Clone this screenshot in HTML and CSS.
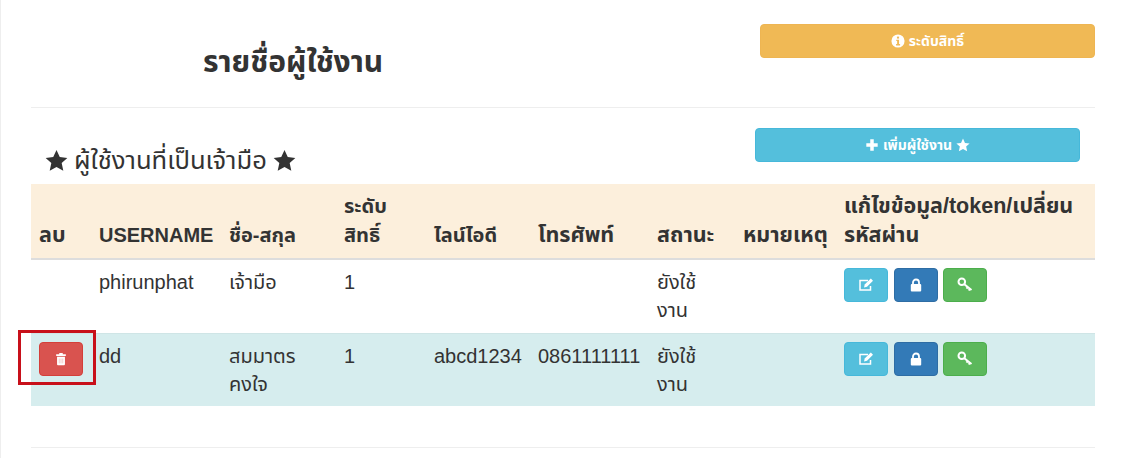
FILE: index.html
```html
<!DOCTYPE html>
<html lang="th">
<head>
<meta charset="utf-8">
<title>รายชื่อผู้ใช้งาน</title>
<link rel="stylesheet" href="styles.css">
</head>
<body>
<svg class="defs" width="0" height="0" aria-hidden="true">
  <symbol id="star" viewBox="0 0 24 24"><path d="M12 1l3.400 7.400 7.900.9-5.900 5.400 1.700 8L12 18.700 4.900 22.700l1.700-8L.7 9.300l7.900-.9z" fill="currentColor"/></symbol>
</svg>
<main class="page">
  <section class="top">
    <h3 class="title">รายชื่อผู้ใช้งาน</h3>
    <a class="btn warning top-btn">
      <svg class="ico" viewBox="0 0 16 16"><circle cx="8" cy="8" r="7.500" fill="currentColor"/><rect x="6.800" y="3" width="2.400" height="2.200" fill="#f0b955"/><path d="M6 6.500h3.200v5h1.200V13H5.800v-1.500H7V8H6z" fill="#f0b955"/></svg>
      ระดับสิทธิ์
    </a>
  </section>
  <hr class="rule">
  <section class="sub">
    <h4 class="subtitle"><svg class="ico star-big"><use href="#star"/></svg> ผู้ใช้งานที่เป็นเจ้ามือ <svg class="ico star-big"><use href="#star"/></svg></h4>
    <a class="btn info add-btn">
      <svg class="ico" viewBox="0 0 16 16"><path d="M6 1.500h4V6h4.500v4H10v4.500H6V10H1.500V6H6z" fill="currentColor"/></svg>
      เพิ่มผู้ใช้งาน
      <svg class="ico"><use href="#star"/></svg>
    </a>
  </section>
  <table class="users">
    <colgroup>
      <col class="c1"><col class="c2"><col class="c3"><col class="c4"><col class="c5"><col class="c6"><col class="c7"><col class="c8"><col class="c9">
    </colgroup>
    <thead>
      <tr>
        <th class="thai">ลบ</th><th>USERNAME</th><th>ชื่อ-สกุล</th><th>ระดับ สิทธิ์</th><th>ไลน์ไอดี</th><th class="thai">โทรศัพท์</th><th class="thai">สถานะ</th><th class="thai">หมายเหตุ</th><th class="thai">แก้ไขข้อมูล/token/เปลี่ยน รหัสผ่าน</th>
      </tr>
    </thead>
    <tbody>
      <tr class="first">
        <td></td><td>phirunphat</td><td>เจ้ามือ</td><td>1</td><td></td><td></td><td>ยังใช้ งาน</td><td></td>
        <td>
          <div class="actions">
            <a class="btn icon info"><svg class="ico big" viewBox="0 0 16 16"><path d="M12.500 9v4H2v-9.500h8" fill="none" stroke="currentColor" stroke-width="1.500"/><path d="M6 10.500l.7-3L12.800 1.500l2.200 2.200-6 6z" fill="currentColor"/></svg></a>
            <a class="btn icon primary"><svg class="ico big" viewBox="0 0 16 16"><path d="M5 7V5.500a3 3 0 0 1 6 0V7" fill="none" stroke="currentColor" stroke-width="1.800"/><rect x="2.800" y="7" width="10.400" height="7.500" rx="1" fill="currentColor"/></svg></a>
            <a class="btn icon success"><svg class="ico big" viewBox="0 0 16 16"><circle cx="4.800" cy="4.800" r="3.300" fill="none" stroke="currentColor" stroke-width="2"/><path d="M7.300 7.300l7.200 5.700M10.800 10l-1.300 1.700M13 11.800l-1.300 1.700" fill="none" stroke="currentColor" stroke-width="2"/></svg></a>
          </div>
        </td>
      </tr>
      <tr class="hl">
        <td>
          <div class="marked">
            <a class="btn icon danger"><svg class="ico" viewBox="0 0 16 16"><path d="M6 1h4v1.500h3.500v2h-11v-2H6z" fill="currentColor"/><path d="M3.500 5.500h9V14a1 1 0 0 1-1 1h-7a1 1 0 0 1-1-1z" fill="currentColor"/><path d="M6 7.500v5.500M8 7.500v5.500M10 7.500v5.500" stroke="#eeb7b5" stroke-width=".8"/></svg></a>
            <span class="callout"></span>
          </div>
        </td>
        <td>dd</td><td>สมมาตร คงใจ</td><td>1</td><td>abcd1234</td><td>0861111111</td><td>ยังใช้ งาน</td><td></td>
        <td>
          <div class="actions">
            <a class="btn icon info"><svg class="ico big" viewBox="0 0 16 16"><path d="M12.500 9v4H2v-9.500h8" fill="none" stroke="currentColor" stroke-width="1.500"/><path d="M6 10.500l.7-3L12.800 1.500l2.200 2.200-6 6z" fill="currentColor"/></svg></a>
            <a class="btn icon primary"><svg class="ico big" viewBox="0 0 16 16"><path d="M5 7V5.500a3 3 0 0 1 6 0V7" fill="none" stroke="currentColor" stroke-width="1.800"/><rect x="2.800" y="7" width="10.400" height="7.500" rx="1" fill="currentColor"/></svg></a>
            <a class="btn icon success"><svg class="ico big" viewBox="0 0 16 16"><circle cx="4.800" cy="4.800" r="3.300" fill="none" stroke="currentColor" stroke-width="2"/><path d="M7.300 7.300l7.200 5.700M10.800 10l-1.300 1.700M13 11.800l-1.300 1.700" fill="none" stroke="currentColor" stroke-width="2"/></svg></a>
          </div>
        </td>
      </tr>
    </tbody>
  </table>
  <hr class="rule bottom-rule">
</main>
</body>
</html>
```

FILE: styles.css
```css
* { box-sizing: border-box; }
html, body { height: 100%; }
body {
  margin: 0;
  background: #fff;
  color: #333;
  font-family: "Liberation Sans", "Noto Sans", "Noto Sans Thai", Tahoma, sans-serif;
  font-size: 20px;
  overflow: hidden;
}
.defs { position: absolute; }
.page {
  width: 1124px;
  height: 458px;
  padding: 24px 29px 0 30px;
  border-left: 1px solid #eee;
}
.top { display: flex; justify-content: space-between; height: 83px; }
.title {
  margin: 20px 0 0 172px;
  font-size: 30px;
  line-height: 36px;
  font-weight: 700;
}
.rule { margin: 0; border: 0; border-top: 1px solid #eee; }
.sub {
  display: flex;
  justify-content: space-between;
  height: 76px;
  padding: 20px 15px 0 15px;
}
.subtitle {
  margin: 16px 0 0 -1px;
  font-size: 25.6px;
  line-height: 32px;
  height: 32px;
  font-weight: 400;
  display: flex;
  align-items: center;
  gap: 6px;
  white-space: nowrap;
}
.btn {
  display: inline-flex;
  align-items: center;
  justify-content: center;
  gap: 4px;
  height: 34px;
  border: 1px solid transparent;
  border-radius: 4px;
  color: #fff;
  font-size: 14px;
  font-weight: 700;
}
.top-btn { width: 335px; }
.add-btn { width: 325px; }
.warning { background: #f0b955; border-color: #eeb552; }
.info { background: #54bfdc; border-color: #46b8da; }
.primary { background: #337ab7; border-color: #2e6da4; }
.success { background: #5cb85c; border-color: #4cae4c; }
.danger { background: #d9534f; border-color: #d43f3a; }
.ico { width: 14px; height: 14px; flex: none; color: #fff; }
.big { width: 16px; height: 16px; }
.star-big { width: 23px; height: 23px; color: #333; }
.users {
  width: 1064px;
  border-collapse: collapse;
  table-layout: fixed;
}
.c1 { width: 60px; }
.c2 { width: 130px; }
.c3 { width: 115px; }
.c4 { width: 90px; }
.c5 { width: 104px; }
.c6 { width: 119px; }
.c7 { width: 86px; }
.c8 { width: 101px; }
.c9 { width: 259px; }
.users th, .users td { padding: 8px; text-align: left; }
.users th {
  background: #fcefdc;
  border-bottom: 2px solid #ddd;
  line-height: 29px;
  font-weight: 700;
  vertical-align: bottom;
}
.users th.thai { font-size: 21.500px; padding-left: 8px; padding-right: 0; }
.users td {
  line-height: 28px;
  vertical-align: top;
  height: 73px;
}
.first td { height: 74px; }
.hl td {
  background: #d6edee;
  padding-top: 9px;
  box-shadow: inset 0 1px 0 #cfe5e6;
}
.actions { display: flex; gap: 6px; }
.actions .btn:last-child { margin-left: -1px; }
.icon { width: 44px; }
.marked { position: relative; width: 44px; height: 34px; }
.callout {
  position: absolute;
  left: -21px;
  top: -12px;
  width: 78px;
  height: 55px;
  border: 3px solid #c8101a;
}
.bottom-rule { margin-top: 41px; }
```
